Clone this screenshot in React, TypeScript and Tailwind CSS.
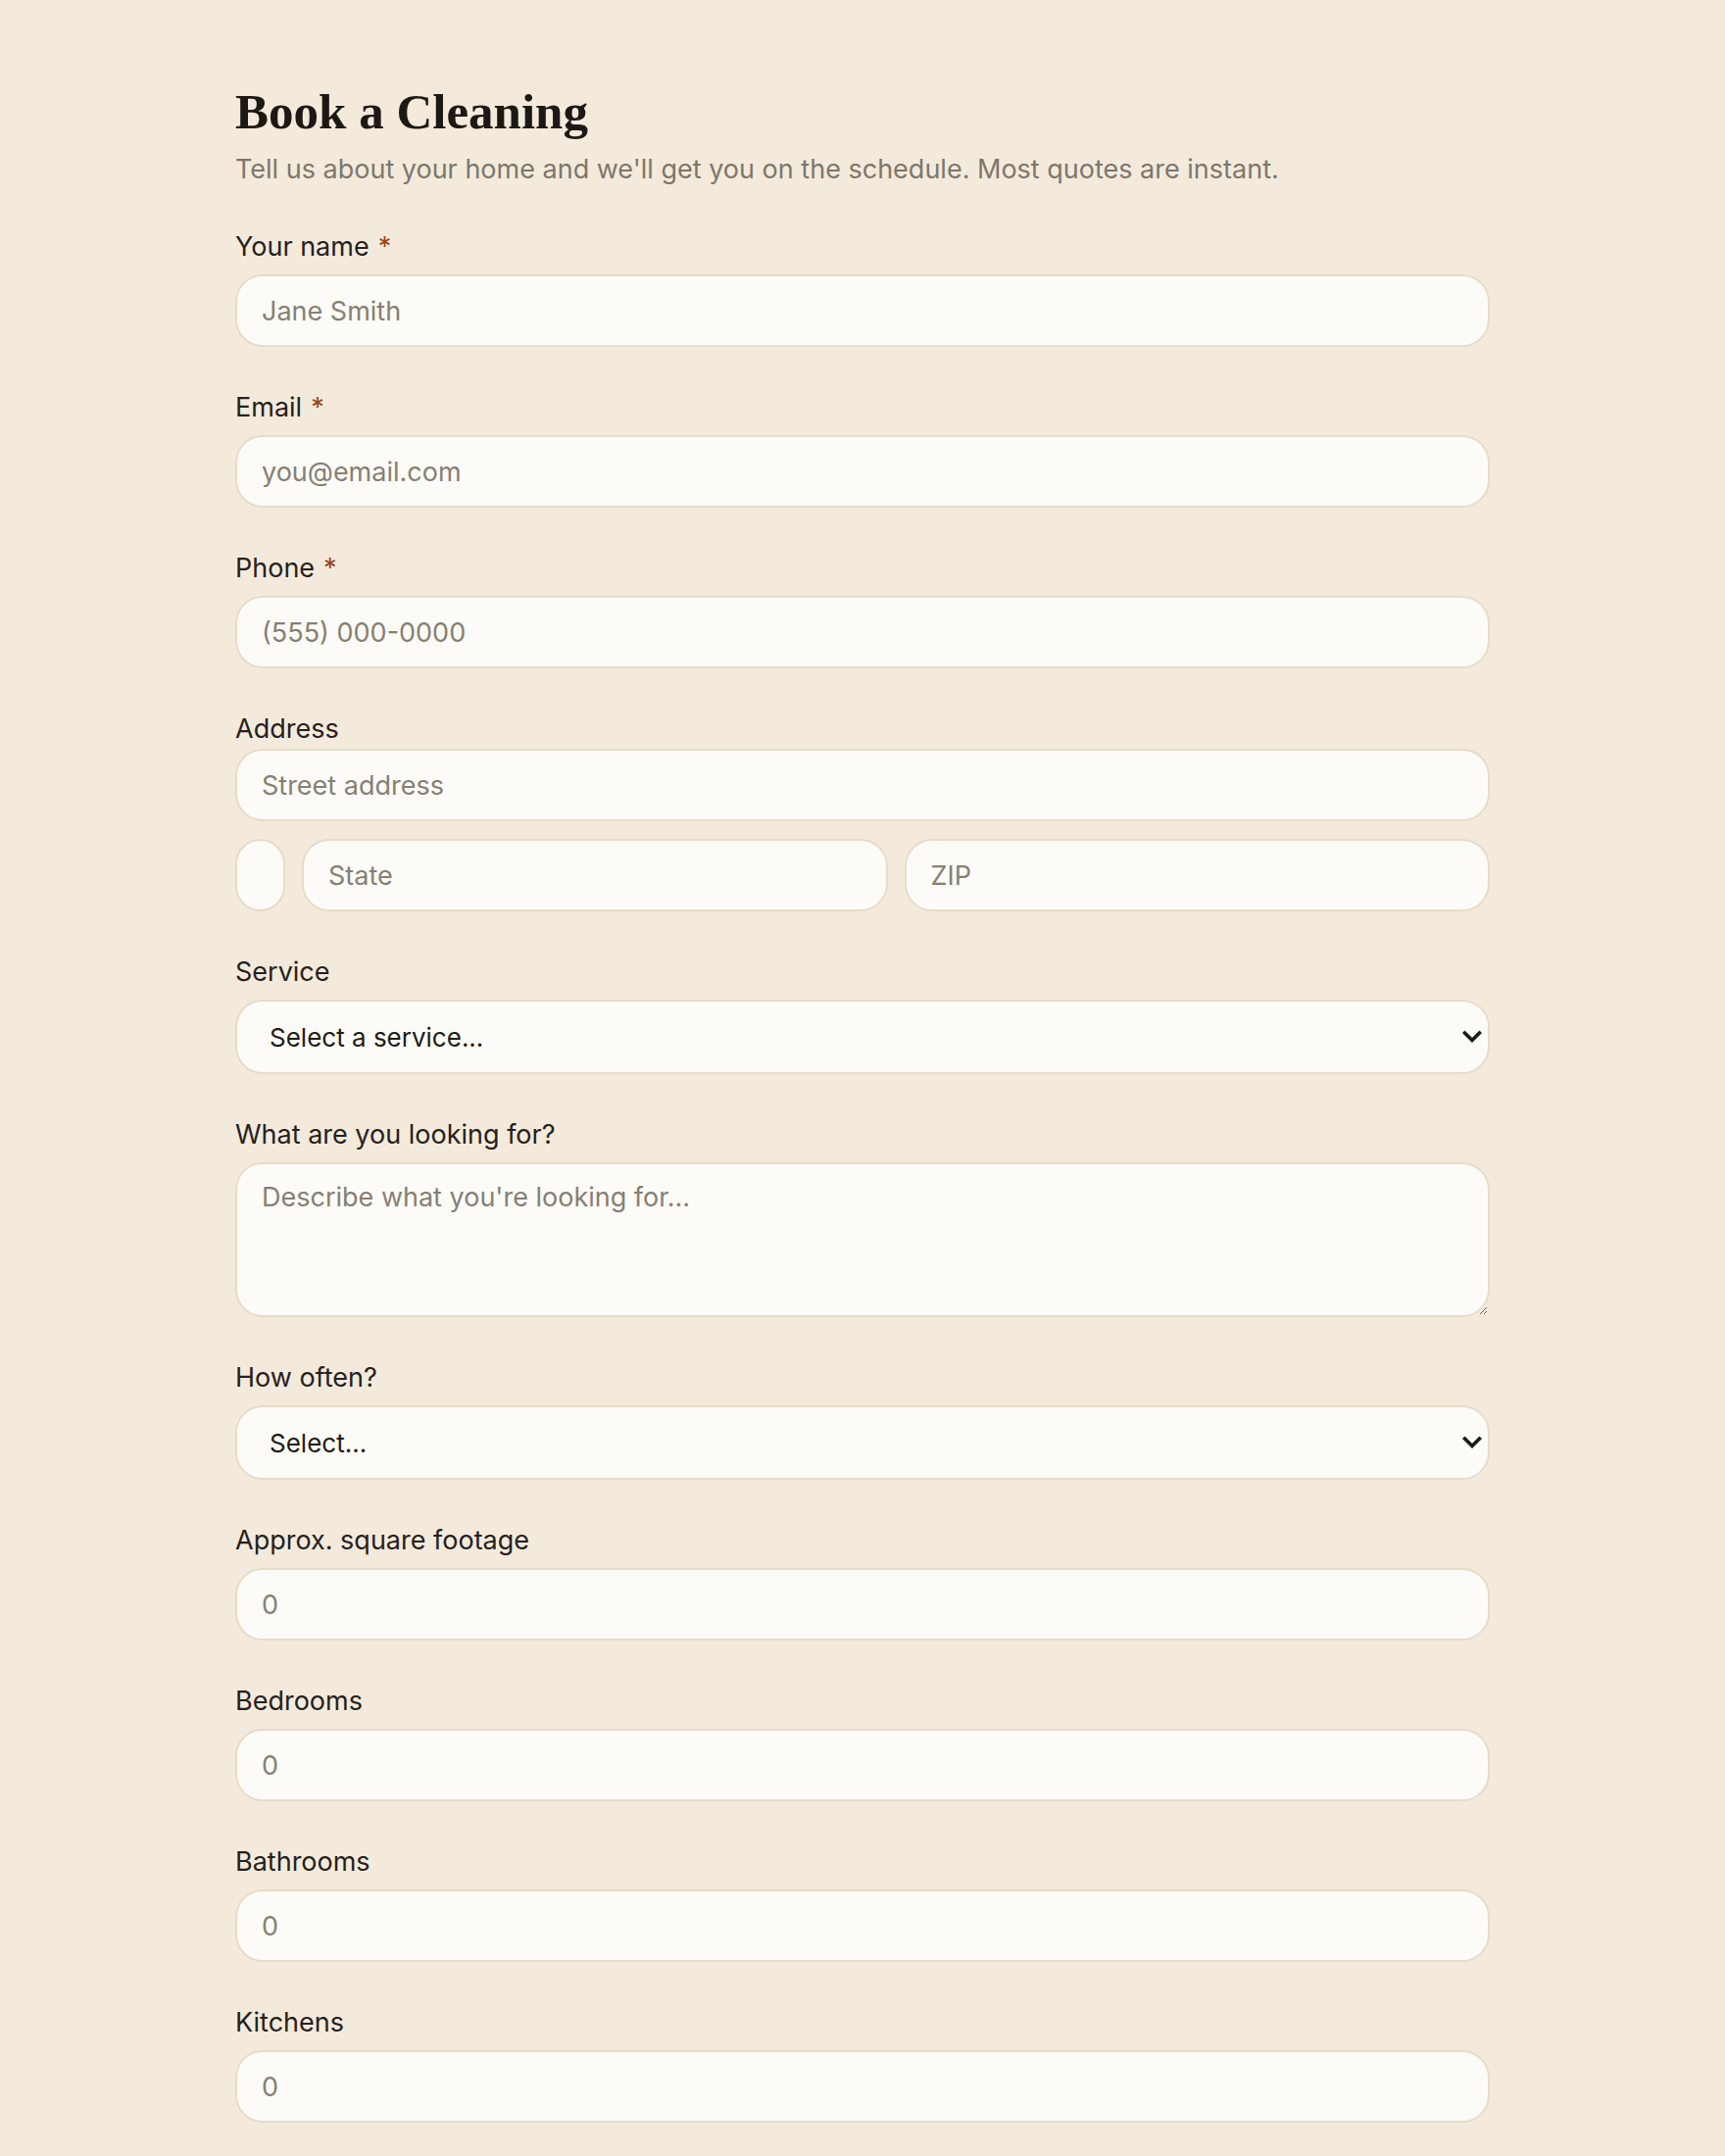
import React from "react";

const inputCls =
  "block w-full h-[74px] rounded-[28px] border-2 border-[#e7dcca] bg-[#fcfbf7] px-[25px] text-[27px] text-[#2a2520] placeholder:text-[#868072] outline-none";

function Label({ children, req, className }: { children: React.ReactNode; req?: boolean; className?: string }) {
  return (
    <label className={"block text-[27px] leading-[32px] text-[#25211c] " + (className ?? "mb-3")}>
      {children}
      {req && <span className="ml-[9px] text-[#9c4215]">*</span>}
    </label>
  );
}

function Chevron() {
  return (
    <svg
      className="pointer-events-none absolute right-[8px] top-1/2 -translate-y-1/2"
      width="20"
      height="13"
      viewBox="0 0 20 13"
      fill="none"
    >
      <path d="M2.5 2.5 L10 10 L17.5 2.5" stroke="#1d1a16" strokeWidth="3.6" strokeLinecap="square" />
    </svg>
  );
}

function Select({ text }: { text: string }) {
  return (
    <div className="relative">
      <select
        defaultValue=""
        className="block w-full h-[76px] appearance-none rounded-[28px] border-2 border-[#e7dcca] bg-[#fcfbf7] pl-[33px] pr-[40px] text-[26px] text-[#1f1b16] outline-none"
      >
        <option value="">{text}</option>
      </select>
      <Chevron />
    </div>
  );
}

function Field({ label, req, placeholder, type = "text" }: { label: string; req?: boolean; placeholder: string; type?: string }) {
  return (
    <div>
      <Label req={req}>{label}</Label>
      <input type={type} placeholder={placeholder} className={inputCls} />
    </div>
  );
}

export default function App() {
  return (
    <div className="min-h-screen bg-[#f4eadc] font-['Inter',sans-serif]">
      <div className="mx-auto max-w-7xl pt-[89px] pb-[60px]">
        <h1 className="font-['Liberation_Serif',serif] text-[51px] leading-[51px] font-bold text-[#1c1915]">
          Book a Cleaning
        </h1>
        <p className="mt-[17px] text-[27px] leading-[32px] text-[#7c776b]">
          Tell us about your home and we'll get you on the schedule. Most quotes are instant.
        </p>

        <form className="mt-[47px] flex flex-col gap-[46px]">
          <Field label="Your name" req placeholder="Jane Smith" />
          <Field label="Email" req placeholder="you@email.com" type="email" />
          <Field label="Phone" req placeholder="(555) 000-0000" type="tel" />

          <div>
            <Label className="mb-[4px]">Address</Label>
            <input placeholder="Street address" className={inputCls} />
            <div className="mt-[18px] flex gap-[17px]">
              <input className="block h-[74px] w-[51px] shrink-0 rounded-[26px] border-2 border-[#e7dcca] bg-[#fcfbf7] outline-none" />
              <input placeholder="State" className={inputCls + " flex-1"} />
              <input placeholder="ZIP" className={inputCls + " flex-1"} />
            </div>
          </div>

          <div>
            <Label>Service</Label>
            <Select text="Select a service..." />
          </div>

          <div>
            <Label>What are you looking for?</Label>
            <textarea
              placeholder="Describe what you're looking for..."
              className="block w-full h-[158px] rounded-[28px] border-2 border-[#e7dcca] bg-[#fcfbf7] px-[25px] pt-[18px] text-[27px] leading-[32px] text-[#2a2520] placeholder:text-[#868072] outline-none"
            />
          </div>

          <div>
            <Label>How often?</Label>
            <Select text="Select..." />
          </div>

          <Field label="Approx. square footage" placeholder="0" type="number" />
          <Field label="Bedrooms" placeholder="0" type="number" />
          <Field label="Bathrooms" placeholder="0" type="number" />
          <Field label="Kitchens" placeholder="0" type="number" />
        </form>
      </div>
    </div>
  );
}
